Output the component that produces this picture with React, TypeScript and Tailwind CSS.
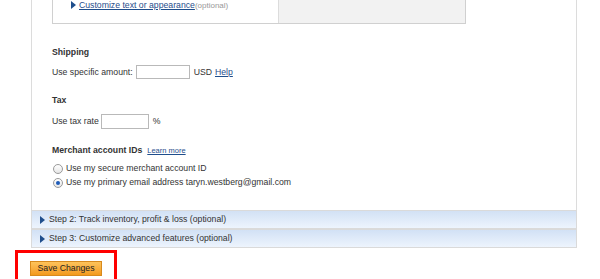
import React from "react";

function Arrow() {
  return (
    <svg width="5" height="8" viewBox="0 0 5 8" className="shrink-0">
      <path d="M0 0 L5 4 L0 8 Z" fill="#1f4e8c" />
    </svg>
  );
}

function Radio({ checked }: { checked?: boolean }) {
  return (
    <span className="flex h-[10px] w-[10px] shrink-0 items-center justify-center rounded-full border border-[#9a9a9a] bg-gradient-to-b from-white to-[#e6e6e6]">
      {checked && <span className="h-[4px] w-[4px] rounded-full bg-[#1e5bb8]" />}
    </span>
  );
}

function StepBar({ label }: { label: string }) {
  return (
    <div className="flex h-[19px] items-center gap-[4px] border border-[#dadada] bg-gradient-to-b from-[#d2e1f5] to-[#edf4fd] pl-[8px]">
      <Arrow />
      <span>{label}</span>
    </div>
  );
}

export default function App() {
  return (
    <div className="relative h-[279px] w-[600px] overflow-hidden bg-white font-['Liberation_Sans',Arial,sans-serif] text-[8.7px] leading-[11px] text-[#333]">
      {/* Main panel */}
      <div className="ml-[31px] w-[546px]">
        <div className="border-l border-r border-[#dcdcdc] pb-[22px] pl-[20px]">
          {/* Embedded button box (top cut off) */}
          <div className="flex h-[24px] w-[414px] border-b border-l border-r border-[#d0d0d0]">
            <div className="flex w-[225px] items-start gap-[3px] pl-[18px] pt-0">
              <span className="pt-[1px]">
                <Arrow />
              </span>
              <span className="text-[#1f4e8c] underline">Customize text or appearance</span>
              <span className="-ml-[3px] text-[8px] text-[#999]">(optional)</span>
            </div>
            <div className="flex-1 border-l border-[#dcdcdc] bg-[#f2f2f2]" />
          </div>

          {/* Shipping */}
          <div className="mt-[23px] font-bold">Shipping</div>
          <div className="mt-[7px] flex h-[14px] items-center">
            <span>Use specific amount:</span>
            <span className="ml-[3px] h-[14px] w-[54px] border border-[#b9b9b9] bg-white" />
            <span className="ml-[4px]">USD</span>
            <span className="ml-[3px] text-[#1f4e8c] underline">Help</span>
          </div>

          {/* Tax */}
          <div className="mt-[16px] font-bold">Tax</div>
          <div className="mt-[8px] flex h-[15px] items-center">
            <span>Use tax rate</span>
            <span className="ml-[2px] h-[15px] w-[48px] border border-[#b9b9b9] bg-white" />
            <span className="ml-[4px]">%</span>
          </div>

          {/* Merchant account IDs */}
          <div className="mt-[16px] flex items-baseline">
            <span className="font-bold">Merchant account IDs</span>
            <span className="ml-[5px] text-[7.5px] text-[#1f4e8c] underline">Learn more</span>
          </div>
          <div className="mt-[7px] flex h-[11px] items-center gap-[3px] pl-[1px]">
            <Radio />
            <span>Use my secure merchant account ID</span>
          </div>
          <div className="mt-[3px] flex h-[11px] items-center gap-[3px] pl-[1px]">
            <Radio checked />
            <span>Use my primary email address taryn.westberg@gmail.com</span>
          </div>
        </div>

        {/* Steps */}
        <StepBar label="Step 2: Track inventory, profit & loss (optional)" />
        <StepBar label="Step 3: Customize advanced features (optional)" />
      </div>

      {/* Save button */}
      <div className="ml-[30px] mt-[13px]">
        <button className="flex h-[15px] w-[72px] items-center justify-center border border-[#d88a1c] bg-gradient-to-b from-[#fdc35a] to-[#f39a1a] text-[8.7px] text-[#222]">
          Save Changes
        </button>
      </div>

      {/* Red highlight annotation */}
      <div className="absolute left-[15px] top-[250px] h-[34px] w-[102px] border-[3px] border-[#ff0000]" />
    </div>
  );
}
